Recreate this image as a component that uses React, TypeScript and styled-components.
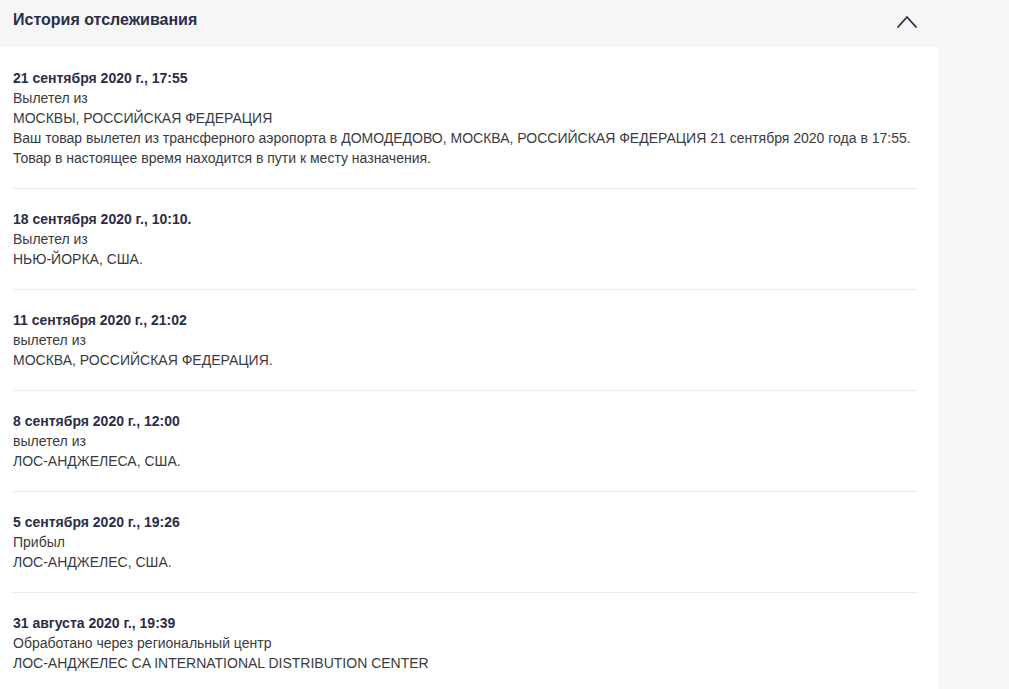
import React, { useState } from "react";
import styled, { createGlobalStyle } from "styled-components";

const GlobalStyle = createGlobalStyle`
  html, body {
    margin: 0;
    padding: 0;
    background-color: #f6f6f7;
  }
  body {
    font-family: "Liberation Sans", Arial, sans-serif;
  }
`;

const Container = styled.div`
  width: 938px;
  display: flex;
  flex-direction: column;
`;

const Header = styled.div`
  height: 47px;
  display: flex;
  flex-direction: row;
  align-items: center;
  justify-content: space-between;
  padding: 0 20px 0 13px;
  box-sizing: border-box;
`;

const Title = styled.div`
  font-size: 16px;
  font-weight: bold;
  color: #2b2d48;
  margin-top: -7px;
`;

const ToggleBtn = styled.button`
  background: none;
  border: none;
  padding: 0;
  width: 22px;
  height: 16px;
  margin-top: -3px;
  cursor: pointer;
  display: flex;
  align-items: center;
  justify-content: center;
`;

const Body = styled.div`
  background-color: #ffffff;
  padding: 1px 20px 0 13px;
`;

const Event = styled.div`
  padding: 20px 0;
  border-bottom: 1px solid #ebebed;
  font-size: 14px;
  line-height: 20px;
  color: #3a3a40;

  &:last-child {
    border-bottom: none;
  }
`;

const EventDate = styled.div`
  font-weight: bold;
  color: #2b2d48;
`;

const EventLine = styled.div``;

interface TrackEvent {
  date: string;
  lines: string[];
}

const events: TrackEvent[] = [
  {
    date: "21 сентября 2020 г., 17:55",
    lines: [
      "Вылетел из",
      "МОСКВЫ, РОССИЙСКАЯ ФЕДЕРАЦИЯ",
      "Ваш товар вылетел из трансферного аэропорта в ДОМОДЕДОВО, МОСКВА, РОССИЙСКАЯ ФЕДЕРАЦИЯ 21 сентября 2020 года в 17:55.",
      "Товар в настоящее время находится в пути к месту назначения.",
    ],
  },
  {
    date: "18 сентября 2020 г., 10:10.",
    lines: ["Вылетел из", "НЬЮ-ЙОРКА, США."],
  },
  {
    date: "11 сентября 2020 г., 21:02",
    lines: ["вылетел из", "МОСКВА, РОССИЙСКАЯ ФЕДЕРАЦИЯ."],
  },
  {
    date: "8 сентября 2020 г., 12:00",
    lines: ["вылетел из", "ЛОС-АНДЖЕЛЕСА, США."],
  },
  {
    date: "5 сентября 2020 г., 19:26",
    lines: ["Прибыл", "ЛОС-АНДЖЕЛЕС, США."],
  },
  {
    date: "31 августа 2020 г., 19:39",
    lines: [
      "Обработано через региональный центр",
      "ЛОС-АНДЖЕЛЕС CA INTERNATIONAL DISTRIBUTION CENTER",
    ],
  },
];

const Chevron = ({ open }: { open: boolean }) => (
  <svg
    width="22"
    height="16"
    viewBox="0 0 22 16"
    fill="none"
    style={{ transform: open ? "none" : "rotate(180deg)" }}
  >
    <path
      d="M2 13 L11 3 L20 13"
      stroke="#2b2d48"
      strokeWidth="1.8"
      strokeLinecap="round"
      strokeLinejoin="round"
    />
  </svg>
);

const App = () => {
  const [open, setOpen] = useState(true);

  return (
    <>
      <GlobalStyle />
      <Container>
        <Header>
          <Title>История отслеживания</Title>
          <ToggleBtn onClick={() => setOpen(!open)}>
            <Chevron open={open} />
          </ToggleBtn>
        </Header>
        {open && (
          <Body>
            {events.map((ev) => (
              <Event key={ev.date}>
                <EventDate>{ev.date}</EventDate>
                {ev.lines.map((line, i) => (
                  <EventLine key={i}>{line}</EventLine>
                ))}
              </Event>
            ))}
          </Body>
        )}
      </Container>
    </>
  );
};

export default App;
